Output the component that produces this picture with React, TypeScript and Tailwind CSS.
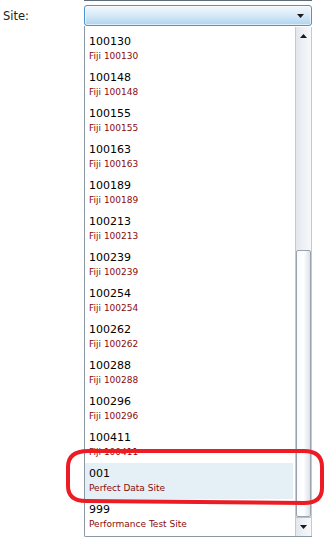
import React from "react";

const items: { code: string; name: string; selected?: boolean }[] = [
  { code: "100130", name: "Fiji 100130" },
  { code: "100148", name: "Fiji 100148" },
  { code: "100155", name: "Fiji 100155" },
  { code: "100163", name: "Fiji 100163" },
  { code: "100189", name: "Fiji 100189" },
  { code: "100213", name: "Fiji 100213" },
  { code: "100239", name: "Fiji 100239" },
  { code: "100254", name: "Fiji 100254" },
  { code: "100262", name: "Fiji 100262" },
  { code: "100288", name: "Fiji 100288" },
  { code: "100296", name: "Fiji 100296" },
  { code: "100411", name: "Fiji 100411" },
  { code: "001", name: "Perfect Data Site", selected: true },
  { code: "999", name: "Performance Test Site" },
];

function Tri({ up = false }: { up?: boolean }) {
  return (
    <svg width="7" height="4" viewBox="0 0 7 4">
      {up ? <path d="M3.5 0 L7 4 L0 4 Z" fill="#1a1a1a" /> : <path d="M0 0 L7 0 L3.5 4 Z" fill="#1a1a1a" />}
    </svg>
  );
}

export default function App() {
  return (
    <div className="relative w-[327px] h-[554px] bg-white font-['DejaVu_Sans',sans-serif] text-black overflow-hidden">
      <div className="ml-[84px] w-[228px] h-px bg-[#5f6d7a]" />
      <div className="flex items-center mt-[4px]">
        <div className="w-[84px] pl-[3px] text-[11.5px] leading-[14px] text-[#222]">Site:</div>
        <div className="w-[228px] h-[21px] rounded-[3px] border border-[#4f93cb] bg-gradient-to-b from-[#f3f9fe] via-[#d6e9f7] to-[#afd3ef] flex items-center justify-end pr-[7px] shadow-[inset_0_0_0_1px_rgba(255,255,255,0.6)]">
          <Tri />
        </div>
      </div>
      <div className="ml-[84px] w-[228px] h-[511px] border-l border-b border-[#8a97a4] rounded-bl-[2px] flex">
        <div className="flex-1 pt-[5px] overflow-hidden">
          {items.map((it) => (
            <div
              key={it.code}
              className={`h-[36px] mr-[2px] pl-[4px] ${it.selected ? "bg-[#e5f0f6]" : ""}`}
            >
              <div className="pt-[4px] text-[11px] leading-[14px] text-black">{it.code}</div>
              <div className="mt-[1px] text-[9px] leading-[12px] text-[#8b0a0a]">{it.name}</div>
            </div>
          ))}
        </div>
        <div className="w-[17px] mt-[1px] flex flex-col border-l border-r border-[#c3cad1] bg-gradient-to-r from-[#e2e7ed] via-[#eef1f5] to-[#f6f8fa]">
          <div className="h-[17px] flex items-center justify-center">
            <Tri up />
          </div>
          <div className="h-[206px]" />
          <div className="h-[267px] rounded-[2px] border border-[#98a3ae] bg-gradient-to-r from-[#f8f9fb] via-[#ffffff] to-[#dde2e8]" />
          <div className="flex-1 flex items-center justify-center border-t border-[#b8c0c8]">
            <Tri />
          </div>
        </div>
      </div>
      <svg className="absolute left-0 top-0 pointer-events-none" width="327" height="554">
        <path
          d="M88 451 L304 451 Q322 451 322 467 L322 488 Q322 503 304 503 L86 501 Q68 501 68 486 L68 467 Q68 451 88 451 Z"
          fill="none"
          stroke="#ed1c24"
          strokeWidth="4"
        />
      </svg>
    </div>
  );
}
